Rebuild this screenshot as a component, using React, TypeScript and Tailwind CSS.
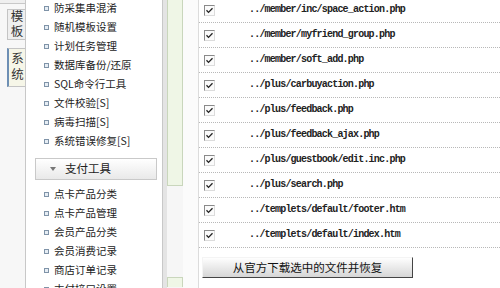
import React from "react";

const group1 = [
  "防采集串混淆",
  "随机模板设置",
  "计划任务管理",
  "数据库备份/还原",
  "SQL命令行工具",
  "文件校验[S]",
  "病毒扫描[S]",
  "系统错误修复[S]",
];
const group2 = [
  "点卡产品分类",
  "点卡产品管理",
  "会员产品分类",
  "会员消费记录",
  "商店订单记录",
  "支付接口设置",
];
const files = [
  "../member/inc/space_action.php",
  "../member/myfriend_group.php",
  "../member/soft_add.php",
  "../plus/carbuyaction.php",
  "../plus/feedback.php",
  "../plus/feedback_ajax.php",
  "../plus/guestbook/edit.inc.php",
  "../plus/search.php",
  "../templets/default/footer.htm",
  "../templets/default/index.htm",
];

function Item({ label }: { label: string }) {
  return (
    <div className="h-[19px] flex items-center pl-[18px] overflow-hidden">
      <span className="w-[5px] h-[5px] border border-[#7f93a8] bg-[#e6edf4] mr-[5px] shrink-0" />
      <span className="text-[10.5px] text-[#222] leading-[12px] whitespace-nowrap">{label}</span>
    </div>
  );
}

function Check() {
  return (
    <div className="w-[11px] h-[11px] border border-t-[#8a8a8a] border-l-[#8a8a8a] border-r-[#dcdcdc] border-b-[#dcdcdc] bg-[#fbfbfb] flex items-center justify-center">
      <svg width="9" height="9" viewBox="0 0 9 9">
        <path d="M1.5 4.3 L3.5 6.4 L7.5 2.2" fill="none" stroke="#222" strokeWidth="1.3" />
      </svg>
    </div>
  );
}

export default function App() {
  return (
    <div className="w-[500px] h-[288px] overflow-hidden flex bg-white font-[Noto_Sans_CJK_SC,Noto_Sans,sans-serif]">
      {/* tabs */}
      <div className="w-[25px] shrink-0 bg-[#f7f7f7] flex flex-col items-end">
        <div className="w-[25px] h-[4px] border-b border-[#c8c8c8] bg-[#efefef]" />
        <div className="mt-[5px] w-[18px] h-[31px] bg-[#efefef] border border-r-0 border-[#c4c4c4] flex items-center justify-center text-[12.5px] text-[#333]">
          <span className="[writing-mode:vertical-rl] leading-[14px] tracking-[2px]">模板</span>
        </div>
        <div className="mt-[8px] w-[18px] h-[39px] bg-[#f6f6e8] border border-r-0 border-[#c4c4c4] border-l-[2px] border-l-[#6e8fb4] flex items-center justify-center text-[12.5px] text-[#333]">
          <span className="[writing-mode:vertical-rl] leading-[14px] tracking-[3px]">系统</span>
        </div>
      </div>
      {/* sidebar */}
      <div className="w-[138px] shrink-0 border-l border-r border-[#c8c8c8] bg-white">
        <div className="-mt-[1.5px]">
          {group1.map((l) => (
            <Item key={l} label={l} />
          ))}
        </div>
        <div className="mt-[7px] ml-[9px] w-[122px] h-[22px] border border-[#c9c9c9] bg-gradient-to-b from-[#ffffff] to-[#e9e9e9] flex items-center">
          <svg width="6" height="4" viewBox="0 0 6 4" className="ml-[14px]">
            <path d="M0 0 L6 0 L3 4 Z" fill="#777" />
          </svg>
          <span className="ml-[9px] text-[11.5px] text-[#222] leading-[13px]">支付工具</span>
        </div>
        <div className="mt-[5px]">
          {group2.map((l) => (
            <Item key={l} label={l} />
          ))}
        </div>
      </div>
      {/* gutter */}
      <div className="w-[36px] shrink-0 flex bg-[#f6f6f6] border-r border-[#dcdcdc]">
        <div className="w-[4px] bg-[#e4e4e4]" />
        <div className="w-[16px] flex flex-col">
          <div className="h-[186px] bg-[#eff6e6] border border-t-0 border-[#c9d6bc]" />
          <div className="flex-1" />
          <div className="h-[10px] mb-[1px] bg-[#eff6e6] border border-b-0 border-[#c9d6bc]" />
        </div>
        <div className="flex-1 bg-[#fbfbfb]" />
      </div>
      {/* content */}
      <div className="flex-1 bg-white">
        <div className="-mt-[2px]">
          {files.map((f) => (
            <div key={f} className="h-[25px] flex items-center border-b border-dotted border-[#b8b8b8]">
              <div className="ml-[5px]">
                <Check />
              </div>
              <span className="ml-[34px] font-mono font-bold text-[10px] tracking-[-0.8px] text-[#222] leading-[12px] whitespace-nowrap">
                {f}
              </span>
            </div>
          ))}
        </div>
        <button className="mt-[9px] ml-[3px] w-[211px] h-[21px] border border-t-[#f4f4f4] border-l-[#f4f4f4] border-r-[#444] border-b-[#444] bg-gradient-to-b from-[#fefefe] to-[#d6d6d6] flex items-center justify-center text-[11.5px] text-[#111] leading-[13px]">
          从官方下载选中的文件并恢复
        </button>
      </div>
    </div>
  );
}
